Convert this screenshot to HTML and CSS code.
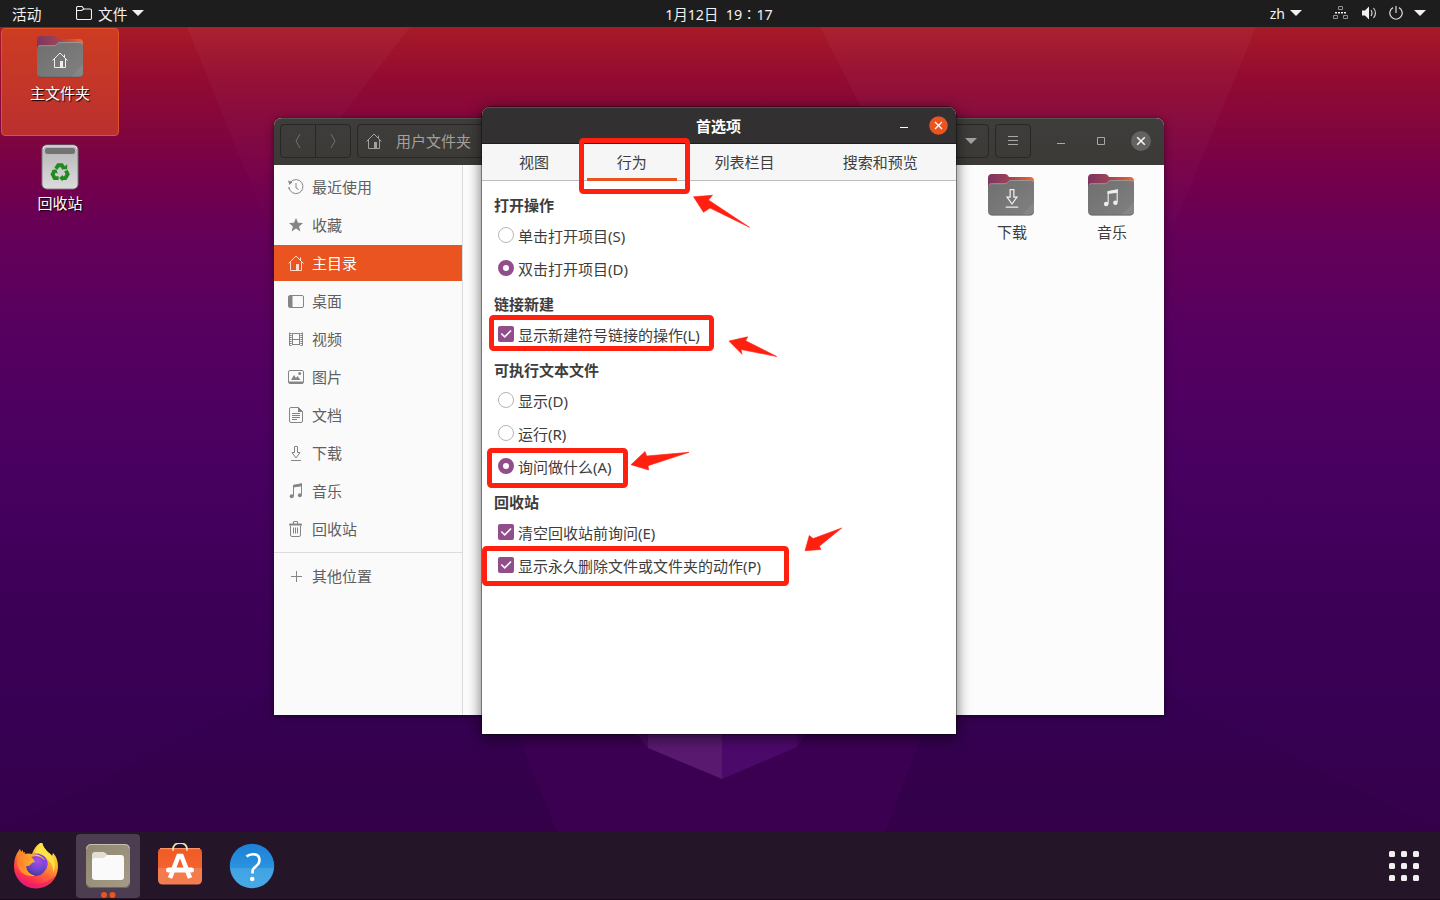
FILE: index.html
```html
<!DOCTYPE html>
<html lang="zh-CN">
<head>
<meta charset="utf-8">
<title>首选项</title>
<link rel="stylesheet" href="styles.css">
</head>
<body>
<svg class="defs" width="0" height="0" aria-hidden="true">
  <defs>
    <linearGradient id="fold-back" x1="0" x2="1" y1="0" y2="0"><stop offset="0" stop-color="#7c3560"/><stop offset=".5" stop-color="#a34456"/><stop offset=".85" stop-color="#e0592f"/><stop offset="1" stop-color="#f0703c"/></linearGradient>
    <linearGradient id="fold-front" x1="0" x2="1" y1="0" y2="1"><stop offset="0" stop-color="#6f6f6f"/><stop offset="1" stop-color="#808080"/></linearGradient>
    <symbol id="folder" viewBox="0 0 46 43">
      <path d="M0 5a4 4 0 0 1 4-4h13q2 0 3 1.500l1 1.500h21a4 4 0 0 1 4 4v10H0z" fill="url(#fold-back)"/>
      <path d="M0 14a3.500 3.500 0 0 1 3.500-3.500H17q1.500 0 2.600-1.200l1-1q1-1 2.500-1H42a4 4 0 0 1 4 4V38a4 4 0 0 1-4 4H4a4 4 0 0 1-4-4z" fill="url(#fold-front)"/>
      <path d="M1 11.500Q2 10.700 3.500 10.700H17q1.500 0 2.600-1.200l1-1q1-1 2.500-1H42q2 0 3 1.200" fill="none" stroke="#a0a0a0" stroke-width=".8"/>
      <path d="M46 29v9a4 4 0 0 1-4 4H34z" fill="#868686"/>
      <path d="M1 40.500Q2 42.200 4 42.200H42q2 0 3-1.700" fill="none" stroke="#555" stroke-width=".8"/>
    </symbol>
    <symbol id="home" viewBox="0 0 16 16"><g fill="none" stroke="currentColor"><path d="M.5 8.500L8 1l7.500 7.500M2.500 7v8.500h11V7M12.500 5V2.500"/></g><path d="M8 9h3v6H8z" fill="currentColor"/></symbol>
    <symbol id="down" viewBox="0 0 16 16"><path d="M6.500.5h3v6h2.500L8 12 4 6.500h2.500zM3 14.500h10" fill="none" stroke="currentColor"/></symbol>
    <symbol id="music" viewBox="0 0 16 16"><path d="M5.500 13V2.500L13.500 1v10.500" fill="none" stroke="currentColor"/><path d="M5 2l9-1.700v3L5 4.500z" fill="currentColor"/><circle cx="3.700" cy="13.300" r="2" fill="currentColor"/><circle cx="11.900" cy="12.300" r="2" fill="currentColor"/></symbol>
  </defs>
</svg>

<div class="desktop">
  <svg class="wallpaper" width="1440" height="900" viewBox="0 0 1440 900" aria-hidden="true">
    <defs>
      <linearGradient id="wall" x1="0" x2="0" y1="0" y2="1">
        <stop offset="0" stop-color="#ad1b24"/><stop offset=".03" stop-color="#a81a27"/><stop offset=".085" stop-color="#930b31"/><stop offset=".14" stop-color="#83063c"/><stop offset=".2" stop-color="#74004c"/><stop offset=".26" stop-color="#650058"/><stop offset=".37" stop-color="#560060"/><stop offset=".52" stop-color="#480060"/><stop offset=".68" stop-color="#3c0057"/><stop offset=".8" stop-color="#370053"/><stop offset=".93" stop-color="#35004a"/>
      </linearGradient>
      <linearGradient id="facet" x1="0" x2="0" y1="0" y2="1"><stop offset="0" stop-color="#fff" stop-opacity=".035"/><stop offset="1" stop-color="#fff" stop-opacity="0"/></linearGradient>
    </defs>
    <rect width="1440" height="900" fill="url(#wall)"/>
    <path d="M187 27H410L340 118L274 240z" fill="url(#facet)"/>
    <path d="M820 27H1256L1164 250L960 300z" fill="url(#facet)"/>
    <path d="M274 690L0 830V832H557L510 715z" fill="#26003a" opacity=".06"/>
    <path d="M1164 690L1440 830V832H885L930 715z" fill="#26003a" opacity=".06"/>
    <path d="M510 715H930L885 832H557z" fill="#500060" opacity=".22"/>
    <path d="M630 725L648 748L722 779V725z" fill="#58196e"/>
    <path d="M722 725V779L797 747L812 725z" fill="#4b096a"/>
    <path d="M630 725L648 748V725zM812 725L797 747V725z" fill="#480060" opacity=".7"/>
  </svg>

  <header class="topbar">
    <span class="activities">活动</span>
    <span class="app-menu">
      <svg width="16" height="14" viewBox="0 0 16 14"><path d="M.5 2A1.500 1.500 0 0 1 2 .5h4L8 3h6a1.500 1.500 0 0 1 1.500 1.500v7.500a1.500 1.500 0 0 1-1.500 1.500H2A1.500 1.500 0 0 1 .5 12zM.5 4.500H5.500L8 3" fill="none" stroke="#f2f2f2" stroke-width="1.100"/></svg>
      <span class="app-name">文件</span><i class="caret"></i>
    </span>
    <span class="clock">1月12日&nbsp; 19∶17</span>
    <span class="lang">zh<i class="caret"></i></span>
    <span class="tray">
      <svg width="15" height="14" viewBox="0 0 15 14"><g fill="none" stroke="#909090"><path d="M5.500.5h4v3h-4zM.5 9.500h4v3h-4zM10.500 9.500h4v3h-4z"/></g><path d="M2 6h2v1.500H2zM5 6h2v1.500H5zM8 6h2v1.500H8zM11 6h2v1.500h-2z" fill="#f2f2f2"/></svg>
      <svg class="volume" width="15" height="14" viewBox="0 0 15 14"><path d="M0 4.500h3L7 .5v13L3 9.500H0z" fill="#f2f2f2"/><path d="M9 4q2 3 0 6M11.500 2q4 5 0 10" fill="none" stroke="#d0d0d0" stroke-width="1.200"/></svg>
      <svg class="power" width="14" height="14" viewBox="0 0 14 14"><path d="M4 1.600A6.200 6.200 0 1 0 10 1.600M7 0v7" fill="none" stroke="#ddd" stroke-width="1.200"/></svg>
      <i class="caret"></i>
    </span>
  </header>

  <div class="desk-icons">
    <div class="desk-icon selected">
      <div class="emblem"><svg width="46" height="43"><use href="#folder"/></svg><svg class="glyph" width="16" height="16"><use href="#home"/></svg></div>
      <span>主文件夹</span>
    </div>
    <div class="desk-icon">
      <svg width="38" height="46" viewBox="0 0 38 46"><defs><linearGradient id="bin" x1="0" x2="0" y1="0" y2="1"><stop offset="0" stop-color="#b5b5b5"/><stop offset="1" stop-color="#dcdcdc"/></linearGradient></defs><rect x=".8" y=".8" width="36.400" height="44.400" rx="5" fill="url(#bin)" stroke="#5c4a5c"/><path d="M2 5Q2 2 5 2H33q3 0 3 3" fill="none" stroke="#eee"/><rect x="4" y="4" width="30" height="6" rx="2.500" fill="#737373"/>
        <g transform="translate(1.900 1) scale(.9)"><g fill="none" stroke="#218a21" stroke-width="4.200"><path d="M14.500 26.500L17 22.500h4l2.500 4"/><path d="M25.500 28.500l2 4-2.500 4.200H20.500"/><path d="M17.500 36.700H13L10.800 32.500l2.200-4"/></g><path d="M20.500 27h6.500v-5.500zM22 33v7.500l-4-3.800zM9.500 28l5.500-1 1.500 5z" fill="#218a21"/></g></svg>
      <span>回收站</span>
    </div>
  </div>

  <section class="window files">
    <div class="files-head">
      <div class="nav">
        <span><svg width="8" height="16" viewBox="0 0 8 16"><path d="M6 1L2 8l4 7" fill="none" stroke="#74726f"/></svg></span>
        <span><svg width="8" height="16" viewBox="0 0 8 16"><path d="M2 1l4 7-4 7" fill="none" stroke="#74726f"/></svg></span>
      </div>
      <div class="path"><svg width="16" height="16"><use href="#home"/></svg><span>用户文件夹</span><i class="caret"></i></div>
      <div class="menu"><svg width="12" height="10" viewBox="0 0 12 10"><path d="M1 .5h10M1 4.500h10M1 8.500h10" stroke="#aaa8a5"/></svg></div>
      <div class="controls">
        <svg width="8" height="10" viewBox="0 0 8 10"><path d="M0 7.500h8" stroke="#aaa8a5"/></svg>
        <svg width="8" height="8" viewBox="0 0 8 8"><path d="M.5.5h7v7h-7z" fill="none" stroke="#aaa8a5"/></svg>
        <svg width="20" height="20" viewBox="0 0 20 20"><circle cx="10" cy="10" r="10" fill="#636261"/><path d="M6.200 6.200l7.600 7.600M13.800 6.200l-7.600 7.600" stroke="#f4f4f4" stroke-width="1.600"/></svg>
      </div>
    </div>
    <div class="files-body">
      <nav class="sidebar">
        <a><svg width="16" height="16" viewBox="0 0 16 16"><path d="M2.500 3.200A7 7 0 1 1 1 8.500M8 4v5l2.500 1.500" fill="none" stroke="currentColor"/><path d="M0 1.500L4.500 3 1.500 6zM.5 8h1v2h-1z" fill="currentColor"/></svg>最近使用</a>
        <a><svg width="16" height="16" viewBox="0 0 16 16"><path d="M8 1l2 4.800 5 .3-3.900 3.300L12.400 14.400 8 11.600 3.600 14.400l1.300-5L1 6.100l5-.3z" fill="currentColor"/></svg>收藏</a>
        <a class="on"><svg width="16" height="16"><use href="#home"/></svg>主目录</a>
        <a><svg width="16" height="16" viewBox="0 0 16 16"><rect x=".5" y="2.500" width="15" height="12" rx="1.500" fill="none" stroke="currentColor"/><path d="M1 3h3.500v11H1z" fill="currentColor"/></svg>桌面</a>
        <a><svg width="16" height="16" viewBox="0 0 16 16"><path d="M1.500 1.500v13M14.500 1.500v13M4.500 2v12M11.500 2v12M4 2.500h8M4 8.500h8M4 13.500h8" fill="none" stroke="currentColor"/><path d="M2.700 2v13M13.300 2v13" fill="none" stroke="currentColor" stroke-width="2" stroke-dasharray="1 1"/></svg>视频</a>
        <a><svg width="16" height="16" viewBox="0 0 16 16"><rect x=".5" y="1.500" width="15" height="13" rx="1.500" fill="none" stroke="currentColor"/><path d="M1 12.500h14v2H1zM3 11l3-5 2 3 1.500-2L12.500 11z" fill="currentColor"/><circle cx="11.700" cy="4.500" r="1.500" fill="currentColor"/></svg>图片</a>
        <a><svg width="16" height="16" viewBox="0 0 16 16"><path d="M3 .5h7.500l4 4V14a1.500 1.500 0 0 1-1.500 1.500H3A1.500 1.500 0 0 1 1.500 14V2A1.500 1.500 0 0 1 3 .5zM4 6.500h8M4 8.500h8M4 10.500h8M4 12.500h5" fill="none" stroke="currentColor"/><path d="M10 0v5h5z" fill="currentColor"/></svg>文档</a>
        <a><svg class="lower" width="16" height="16"><use href="#down"/></svg>下载</a>
        <a><svg width="16" height="16"><use href="#music"/></svg>音乐</a>
        <a><svg width="16" height="16" viewBox="0 0 16 16"><path d="M2.500 4.500v9.500a1.500 1.500 0 0 0 1.500 1.500h7a1.500 1.500 0 0 0 1.500-1.500V4.500M5.500 3V.5h4V3M5.500 6.500v6M7.500 6.500v6M9.500 6.500v6" fill="none" stroke="currentColor"/><path d="M1 3.500Q1 2.500 2 2.500h11q1 0 1 1v1H1z" fill="currentColor"/></svg>回收站</a>
        <hr>
        <a><svg width="16" height="16" viewBox="0 0 16 16"><path d="M3 8.500h11M8.500 3v11" stroke="currentColor"/></svg>其他位置</a>
      </nav>
      <div class="grid">
        <div class="tile"><div class="emblem"><svg width="46" height="43"><use href="#folder"/></svg><svg class="glyph big" width="20" height="20"><use href="#down"/></svg></div><span>下载</span></div>
        <div class="tile"><div class="emblem"><svg width="46" height="43"><use href="#folder"/></svg><svg class="glyph" width="18" height="18"><use href="#music"/></svg></div><span>音乐</span></div>
      </div>
    </div>
  </section>

  <section class="window prefs">
    <div class="prefs-head">
      <b>首选项</b>
      <div class="prefs-controls">
        <svg width="8" height="10" viewBox="0 0 8 10"><path d="M0 7.500h8" stroke="#fff"/></svg>
        <svg width="19" height="19" viewBox="0 0 19 19"><circle cx="9.500" cy="9.500" r="9.300" fill="#e95420"/><path d="M6 6l7 7M13 6l-7 7" stroke="#fff" stroke-width="1.300"/></svg>
      </div>
    </div>
    <div class="tabs"><span>视图</span><span class="on">行为</span><span class="wide">列表栏目</span><span class="wider">搜索和预览</span></div>
    <div class="options">
      <h3>打开操作</h3>
      <label><i class="radio"></i>单击打开项目(S)</label>
      <label><i class="radio on"></i>双击打开项目(D)</label>
      <h3>链接新建</h3>
      <label><svg class="check" width="16" height="16" viewBox="0 0 16 16"><rect width="16" height="16" rx="2" fill="#924d8b"/><path d="M3.300 7.500l3.400 3.400L13 4.500" fill="none" stroke="#fff" stroke-width="1.600"/></svg>显示新建符号链接的操作(L)</label>
      <h3>可执行文本文件</h3>
      <label><i class="radio"></i>显示(D)</label>
      <label><i class="radio"></i>运行(R)</label>
      <label><i class="radio on"></i>询问做什么(A)</label>
      <h3>回收站</h3>
      <label><svg class="check" width="16" height="16" viewBox="0 0 16 16"><rect width="16" height="16" rx="2" fill="#924d8b"/><path d="M3.300 7.500l3.400 3.400L13 4.500" fill="none" stroke="#fff" stroke-width="1.600"/></svg>清空回收站前询问(E)</label>
      <label><svg class="check" width="16" height="16" viewBox="0 0 16 16"><rect width="16" height="16" rx="2" fill="#924d8b"/><path d="M3.300 7.500l3.400 3.400L13 4.500" fill="none" stroke="#fff" stroke-width="1.600"/></svg>显示永久删除文件或文件夹的动作(P)</label>
    </div>
  </section>

  <footer class="dock">
    <div class="app">
      <svg width="46" height="46" viewBox="0 0 46 46">
        <defs>
          <linearGradient id="ff1" x1=".85" x2=".3" y1="0" y2="1"><stop offset="0" stop-color="#fff44f"/><stop offset=".35" stop-color="#ffb52b"/><stop offset=".62" stop-color="#ff6038"/><stop offset=".85" stop-color="#fb2a55"/><stop offset="1" stop-color="#e0128b"/></linearGradient>
          <radialGradient id="ff2" cx=".6" cy=".25" r=".8"><stop offset="0" stop-color="#a34fee"/><stop offset=".6" stop-color="#6d45c8"/><stop offset="1" stop-color="#43348f"/></radialGradient>
          <linearGradient id="ff3" x1="0" x2="1"><stop offset="0" stop-color="#ff7a2a"/><stop offset="1" stop-color="#ffb42e"/></linearGradient>
        </defs>
        <g transform="translate(0 -1)">
        <path d="M29 0q1 6 7 11 2 1 3 3l1-3q5 5 5 14A22 22 0 0 1 1 24Q1 14 7 7l1 3 2-2 0 4q6-1 9 0 3-9 10-12z" fill="url(#ff1)"/>
        <path d="M3 33q8 9 20 9t20-9A22 22 0 0 1 3 33z" fill="#ec1c6f" opacity=".7"/>
        <path d="M29 0q1 6 7 11 9 8 4 20 1-9-5-13Q27 14 22 13 22 5 29 0z" fill="#ffe443"/>
        <circle cx="23" cy="24" r="10" fill="url(#ff2)"/>
        <path d="M19 12q9 0 13 6l-5-1q7 5 5 12 5-7 1-13-5-6-14-4z" fill="#8a42dc"/>
        <path d="M7 7l1 4 4-1q-1 3 1 4 6-1 9 6-3 0-5 3-3 2-4 1 0 7 9 10Q6 35 4 21 4 13 7 7z" fill="url(#ff3)"/>
        </g>
      </svg>
    </div>
    <div class="app active">
      <svg width="46" height="46" viewBox="0 0 46 46"><defs><linearGradient id="fm" x1="0" x2="1" y1="0" y2="1"><stop offset="0" stop-color="#90886f"/><stop offset="1" stop-color="#a39b87"/></linearGradient></defs><rect x="1" y="1" width="44" height="44" rx="5" fill="url(#fm)"/><path d="M1.500 6Q2 1.500 6 1.500h34q4 0 4.500 4" fill="none" stroke="#c5c0b0"/><path d="M1.500 41Q2 44.500 6 44.500h34q4 0 4.500-4" fill="none" stroke="#6e6757"/><path d="M7 12q0-3 3-3h8q2 0 3 1.500l1.500 1.500H35v10H7z" fill="#e1ded2"/><path d="M7 18q0-3 3-3h7q2 0 3.500-1.500L22 12h14q3 0 3 3v19q0 3-3 3H10q-3 0-3-3z" fill="#fafafa"/></svg>
      <i class="running"></i>
    </div>
    <div class="app">
      <svg width="46" height="46" viewBox="0 0 46 46"><defs><linearGradient id="sw" x1="0" x2="0" y1="0" y2="1"><stop offset="0" stop-color="#f15a22"/><stop offset=".54" stop-color="#f26330"/><stop offset=".55" stop-color="#f47a4b"/><stop offset="1" stop-color="#f27d50"/></linearGradient></defs><rect x="1" y="5" width="44" height="36.500" rx="4.500" fill="url(#sw)"/><path d="M3 5.700h40" stroke="#ffa27b"/><path d="M16 8V7q0-6.500 7-6.500T30 7v1" transform="translate(0 -.3)" fill="none" stroke="#efdcae" stroke-width="1.800"/><path d="M13 35l8.500-22h3l8.500 22" fill="none" stroke="#fff" stroke-width="4.600"/><rect x="9" y="24.500" width="28" height="5" rx="2.500" fill="#fff"/></svg>
    </div>
    <div class="app">
      <svg width="46" height="46" viewBox="0 0 46 46"><defs><linearGradient id="hp" x1="0" x2="0" y1="0" y2="1"><stop offset="0" stop-color="#1c80d8"/><stop offset=".54" stop-color="#2a93de"/><stop offset=".55" stop-color="#40a3e4"/><stop offset="1" stop-color="#48a9e6"/></linearGradient></defs><circle cx="23" cy="23" r="22.200" fill="url(#hp)"/><path d="M17.500 13.500Q20 11.200 24 11.200q6.500 0 6.500 5.800 0 3.500-3.500 6.200-3.500 2.600-3.500 5.300v2" fill="none" stroke="#fff" stroke-width="2.600"/><circle cx="23.200" cy="36" r="2.300" fill="#fff"/></svg>
    </div>
    <div class="all-apps"><i></i><i></i><i></i><i></i><i></i><i></i><i></i><i></i><i></i></div>
  </footer>

  <svg class="marks" width="1440" height="900" viewBox="0 0 1440 900" aria-hidden="true">
    <g fill="none" stroke="#ff2010" stroke-width="5">
      <rect x="581.500" y="140.500" width="106" height="51" rx="2"/>
      <rect x="491.500" y="317.500" width="220" height="31" rx="2"/>
      <rect x="489.500" y="450.500" width="136" height="35" rx="2"/>
      <rect x="484.500" y="548.500" width="302" height="35" rx="2"/>
    </g>
    <g fill="#ff2010" stroke="#ff2010" stroke-width=".6" stroke-linejoin="round">
      <path d="M693.500 196.800L712.500 195.300L708.500 200L749.500 227.300L710 208L703.500 212.300z"/>
      <path d="M729 341L747.700 336.800L745.700 340.800L776.700 356.500L741 349.500L742 354.300z"/>
      <path d="M631 464.700L645 451.500L646.700 456L689 452.300L648 465.700L648.700 470z"/>
      <path d="M805 550.700L809.300 535.500L813.200 538.600L841.700 528L819.300 546.200L821 549.500z"/>
    </g>
  </svg>
</div>
</body>
</html>
```
FILE: styles.css
```css
* { box-sizing: border-box; }

body {
  margin: 0;
  font: 15px/20px "Noto Sans", "Noto Sans CJK SC", sans-serif;
  color: #3d3d3d;
}

.defs { position: absolute; }
svg { display: block; flex: none; }

.desktop {
  position: relative;
  width: 1440px;
  height: 900px;
  overflow: hidden;
  display: flex;
  flex-direction: column;
}

.wallpaper, .marks { position: absolute; inset: 0; }
.marks { z-index: 5; pointer-events: none; }

.caret {
  display: inline-block;
  border: 6px solid transparent;
  border-top-color: currentColor;
  border-bottom: 0;
}

/* Top bar */
.topbar {
  position: relative;
  height: 27px;
  background: #1d1d1d;
  color: #f2f2f2;
  display: grid;
  grid-template-columns: 76px 1fr auto 1fr 92px;
  align-items: center;
  padding: 0 14px 0 0;
  font-size: 14.67px;
}
.activities { padding-left: 12px; }
.app-menu { display: flex; align-items: center; }
.app-menu svg { margin-bottom: 1px; }
.app-name { margin: 0 5px 0 6px; }
.app-menu .caret, .lang .caret { margin-bottom: 1px; }
.clock { font-size: 14.3px; margin-left: 28px; padding-top: 2px; }
.lang { justify-self: end; display: flex; align-items: center; gap: 5px; margin-right: 32px; font-size: 14px; }
.tray { display: flex; align-items: center; margin: 0 0 2px -1px; }
.tray .volume { margin-left: 14px; }
.tray .power { margin-left: 12px; }
.tray .caret { margin: 1px 0 0 auto; }

/* Desktop icons */
.desk-icons {
  position: relative;
  width: 120px;
  padding: 1px 1px 0;
  display: flex;
  flex-direction: column;
}
.desk-icon {
  height: 108px;
  padding-top: 7px;
  display: flex;
  flex-direction: column;
  align-items: center;
  gap: 3px;
  color: #fff;
  text-shadow: 1px 1px 1px #000;
  border: 1px solid transparent;
  border-radius: 4px;
}
.desk-icon.selected {
  padding-top: 6px;
  gap: 5px;
  background: linear-gradient(#cd3c22, #ba302e);
  border-color: #e5512a;
}

.emblem { display: grid; place-items: center; }
.emblem svg { grid-area: 1 / 1; }
.glyph { color: #eee; margin-top: 7px; }

/* Windows */
.window { position: absolute; border-radius: 8px 8px 0 0; }

.files {
  left: 274px;
  top: 118px;
  width: 890px;
  height: 597px;
  background: #fcfcfc;
  box-shadow: 0 1px 7px rgba(0, 0, 0, .5);
  overflow: hidden;
  display: flex;
  flex-direction: column;
}
.files-head {
  height: 47px;
  flex: none;
  background: linear-gradient(#3f3d3b, #3c3a37);
  border-top: 1px solid #555350;
  padding: 5px 13px 7px 6px;
  display: flex;
  align-items: center;
  gap: 6px;
  color: #a3a19e;
}
.nav, .path, .menu {
  height: 34px;
  border: 1px solid #282725;
  border-radius: 4px;
  display: flex;
  align-items: center;
}
.nav { width: 71px; }
.nav span { flex: 1; height: 100%; display: grid; place-items: center; }
.nav span + span { border-left: 1px solid #282725; }
.path { width: 632px; padding: 0 11px 0 8px; }
.path span { margin-left: 14px; flex: 1; }
.menu { width: 36px; justify-content: center; }
.controls { flex: 1; display: flex; align-items: center; gap: 32px; padding-left: 20px; }
.controls svg:last-child { margin-left: -6px; }

.files-body { flex: 1; display: flex; }
.sidebar {
  width: 189px;
  border-right: 1px solid #dcdcdc;
  background: #fafafa;
  padding-top: 4px;
  display: flex;
  flex-direction: column;
  gap: 2px;
}
.sidebar a {
  height: 36px;
  padding: 0 14px;
  display: flex;
  align-items: center;
  gap: 8px;
  color: #5f5f5f;
}
.sidebar svg { color: #858585; }
.sidebar .lower { margin-top: 2px; }
.sidebar .on { background: #e95420; color: #fff; }
.sidebar .on svg { color: #ffd9c9; }
.sidebar hr { width: 100%; height: 1px; margin: 3px 0; border: 0; background: #dcdcdc; }

.grid { flex: 1; display: flex; justify-content: flex-end; padding: 8px 3px 0 0; }
.tile { width: 100px; display: flex; flex-direction: column; align-items: center; gap: 6px; }
.tile span { padding-left: 2px; }
.glyph.big { margin-top: 8px; margin-left: 2px; }

.prefs {
  left: 482px;
  top: 107px;
  width: 474px;
  height: 627px;
  background: #fff;
  box-shadow: 0 0 0 1px rgba(0, 0, 0, .35), 0 3px 14px 1px rgba(0, 0, 0, .55);
  overflow: hidden;
}
.prefs-head {
  height: 37px;
  background: #323030;
  border-top: 1px solid #504e4e;
  border-bottom: 1px solid #1f1d1d;
  color: #fff;
  display: grid;
  grid-template-columns: 1fr auto 1fr;
  align-items: center;
}
.prefs-head b { grid-column: 2; margin-left: -1px; }
.prefs-controls {
  justify-self: end;
  display: flex;
  align-items: center;
  gap: 21px;
  margin: 0 8px 1px 0;
}
.tabs {
  height: 37px;
  background: #f6f6f6;
  border-bottom: 1px solid #bdbdbd;
  padding: 0 8px 0 7px;
  display: flex;
  gap: 8px;
}
.tabs span { width: 90px; height: 37px; line-height: 37px; text-align: center; }
.tabs .on { border-bottom: 3px solid #e95420; }
.tabs .wide { width: 120px; }
.tabs .wider { width: 136px; }

.options { padding: 7px 12px; }
.options h3 { margin: 0; height: 33px; padding-top: 1px; line-height: 33px; font-size: 15px; font-weight: 700; }
.options label { height: 33px; padding: 0 0 3px 4px; display: flex; align-items: center; gap: 4px; }
.radio {
  width: 16px;
  height: 16px;
  border: 1px solid #b5b5b5;
  border-radius: 50%;
  background: #fff;
}
.radio.on { border: 5.500px solid #924d8b; }
.radio, .check { margin-bottom: 2px; }

/* Dock */
.dock {
  position: relative;
  height: 68px;
  margin-top: auto;
  background: #241628;
  border-bottom: 1px solid #140c18;
  padding: 2px 20px 1px 4px;
  display: flex;
  gap: 8px;
}
.app { width: 64px; height: 64px; display: grid; place-items: center; border-radius: 4px; position: relative; }
.app.active { background: #4c3e50; }
.running {
  position: absolute;
  left: 25px;
  bottom: 0;
  width: 6px;
  height: 6px;
  border-radius: 50%;
  background: #e95420;
  box-shadow: 8.500px 0 #e95420;
}
.all-apps {
  margin-left: auto;
  align-self: center;
  display: grid;
  grid-template-columns: repeat(3, 6px);
  gap: 6px;
  padding-right: 1px;
}
.all-apps i { height: 6px; border-radius: 1.500px; background: #f2f0ee; }
```
